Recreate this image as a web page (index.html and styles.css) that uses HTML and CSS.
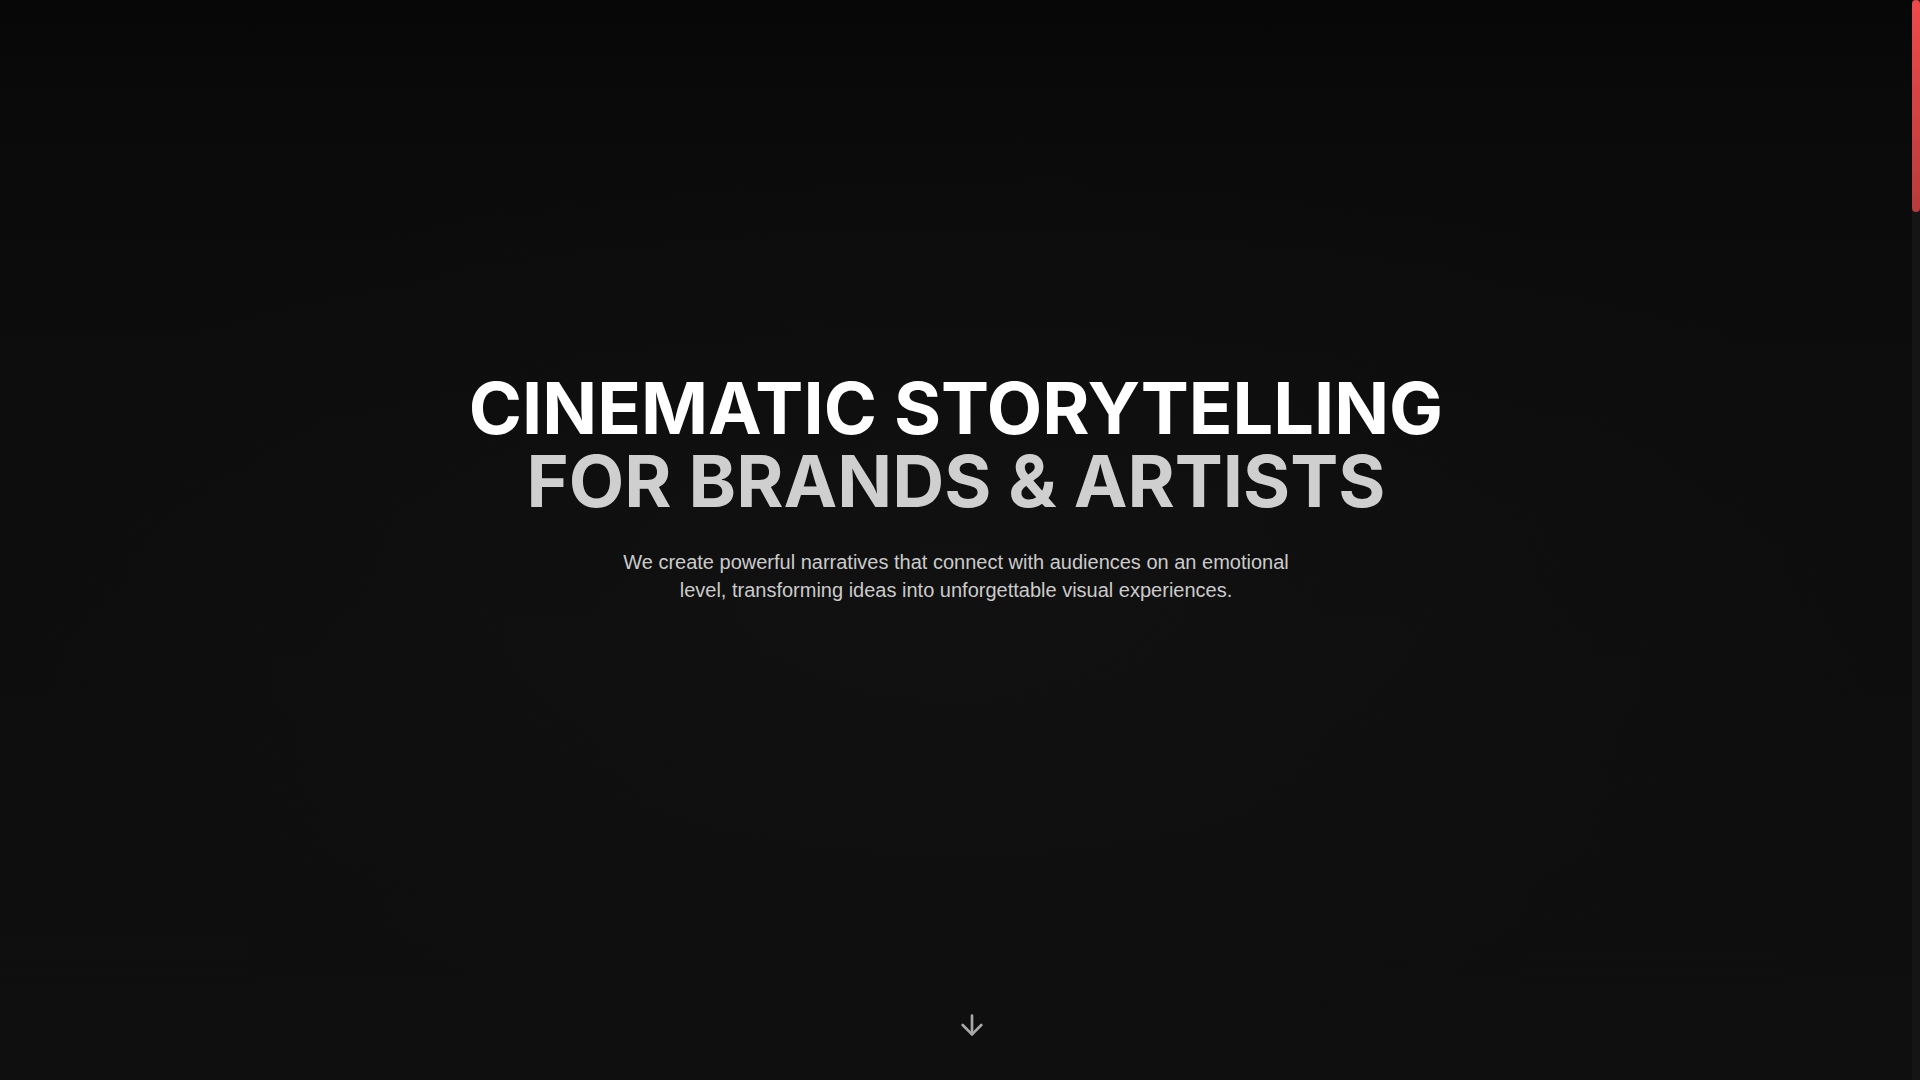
FILE: index.html
```html
<!DOCTYPE html>
<html lang="en">
<head>
<meta charset="utf-8">
<title>Cinematic Storytelling</title>
<link rel="stylesheet" href="styles.css">
</head>
<body>
<main class="page">
  <section class="hero">
    <div class="hero-content">
      <h1 class="hero-title">
        <span class="line line-primary">CINEMATIC STORYTELLING</span>
        <span class="line line-secondary">FOR BRANDS &amp; ARTISTS</span>
      </h1>
      <p class="hero-text">We create powerful narratives that connect with audiences on an emotional level, transforming ideas into unforgettable visual experiences.</p>
    </div>
    <div class="scroll-hint" aria-hidden="true">
      <svg width="32" height="32" viewBox="0 0 24 24" fill="none" stroke="currentColor" stroke-width="2" stroke-linecap="round" stroke-linejoin="round"><path d="M12 5v14"/><path d="m19 12-7 7-7-7"/></svg>
    </div>
  </section>
  <section class="work"></section>
  <section class="about"></section>
  <section class="contact"></section>
</main>
<div class="scroll-rail" aria-hidden="true"><div class="scroll-thumb"></div></div>
</body>
</html>
```

FILE: styles.css
```css
html, body {
  margin: 0;
  padding: 0;
  background: #0e0e0e;
}

html {
  scrollbar-width: none;
}
html::-webkit-scrollbar {
  display: none;
}

body {
  font-family: "Liberation Sans", Arial, sans-serif;
  color: #fff;
  padding-right: 8px;
}

.scroll-rail {
  position: fixed;
  top: 0;
  right: 0;
  width: 8px;
  height: 100vh;
  background: #151515;
}

.scroll-thumb {
  height: 212px;
  border-radius: 4px;
  background: linear-gradient(to bottom, #ef4a4a, #b83b3b);
}

.hero {
  position: relative;
  height: 1080px;
  box-sizing: border-box;
  padding-bottom: 105px;
  display: flex;
  flex-direction: column;
  align-items: center;
  justify-content: center;
  background:
    radial-gradient(ellipse 70% 60% at 50% 55%, rgba(20, 20, 20, 0.55), rgba(0, 0, 0, 0) 70%),
    linear-gradient(to bottom, #070707 0%, #0a0a0a 10%, #0d0d0d 40%, #0f0f0f 100%);
}

.hero-content {
  display: flex;
  flex-direction: column;
  align-items: center;
  text-align: center;
}

.hero-title {
  margin: 0 0 31px;
  font-family: Inter, "Noto Sans", sans-serif;
  font-weight: 700;
  font-size: 72px;
  line-height: 73px;
  letter-spacing: 0;
}

.line {
  display: block;
}

.line-primary {
  color: #ffffff;
}

.line-secondary {
  color: #cfcfcf;
}

.hero-text {
  margin: 0;
  max-width: 680px;
  font-size: 20px;
  line-height: 28px;
  color: #cbcbcb;
}

.scroll-hint {
  position: absolute;
  left: 50%;
  bottom: 39px;
  width: 32px;
  height: 32px;
  color: #a8a8a8;
}

.scroll-hint svg {
  display: block;
}

.work,
.about,
.contact {
  background: #0e0e0e;
  height: 1480px;
}
```
